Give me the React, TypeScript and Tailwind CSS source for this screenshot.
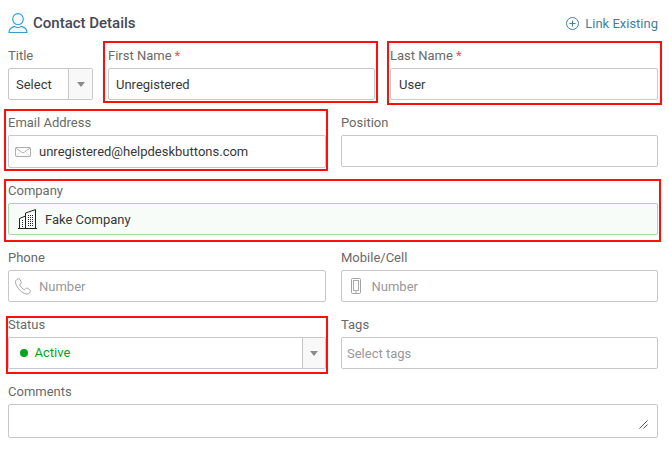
import React from 'react';

type FieldProps = {
  label: string;
  required?: boolean;
  className?: string;
  box?: string;
  mark?: string;
  children?: React.ReactNode;
};

function Field({ label, required, className = '', box = 'h-8 border-[#c8c8c8] bg-white', mark, children }: FieldProps) {
  return (
    <div className={`relative ${className}`}>
      <div className="h-6 pt-[2px] leading-5 whitespace-nowrap text-[#6a6a6a]">
        {label}
        {required && <span className="ml-[3px] text-[#f0505a]">*</span>}
      </div>
      <div className={`flex items-center rounded-[2px] border text-[#383838] ${box}`}>{children}</div>
      {mark && <div className={`pointer-events-none absolute border-2 border-[#ff0f0a] ${mark}`} />}
    </div>
  );
}

function Arrow({ width = 'w-6' }: { width?: string }) {
  return (
    <div className={`ml-auto flex h-full items-center justify-center border-l border-[#c8c8c8] bg-[#f8f8f8] ${width}`}>
      <svg width="8" height="5" viewBox="0 0 8 5" fill="#8c8c8c"><path d="M0 0h8L4 5z" /></svg>
    </div>
  );
}

function PersonIcon() {
  return (
    <svg width="20" height="21" viewBox="0 0 20 21" fill="#f3f9fd" stroke="#3a9bcb" strokeWidth="1.1">
      <ellipse cx="10" cy="6.2" rx="5.3" ry="5.6" />
      <path d="M1 19.500c0-3.600 2-5.100 5.600-6.100 2 1.300 4.800 1.300 6.800 0 3.600 1 5.600 2.500 5.600 6.100z" />
    </svg>
  );
}

function MailIcon() {
  return (
    <svg width="16" height="10" viewBox="0 0 16 10" fill="none" stroke="#a3a3a3" strokeWidth="0.9">
      <rect x="0.5" y="0.5" width="15" height="9" rx="0.7" />
      <path d="M1 1l5.800 4.300q1.200 0.900 2.400 0L15 1" strokeWidth="0.8" />
      <path d="M1 9l4.500-4.300M15 9l-4.500-4.300" strokeWidth="0.35" />
    </svg>
  );
}

function BuildingIcon() {
  return (
    <svg width="19" height="20" viewBox="0 0 19 20" fill="none" stroke="#222">
      <path d="M0 19.500h19M1.500 19V9.500L7.500 7M7.500 19V4L17.500 0.600V19" />
      <path d="M4.500 11v7M10.500 6v12M12.500 6v12M14.500 6v12" strokeDasharray="1 1" />
    </svg>
  );
}

function PhoneIcon() {
  return (
    <svg width="16" height="17" viewBox="0 0 16 17" fill="none" stroke="#999" strokeWidth="0.9">
      <path d="M3.600 0.700C1.200 1.300 0 3.200 0.700 5.500 2 10 6.700 15 11 16c2.100 0.400 3.800-0.500 4.400-2.500 0.200-0.700 0-1.200-0.500-1.600l-2.300-1.600c-0.600-0.400-1.300-0.300-1.800 0.200l-0.800 0.900c-0.400 0.400-0.900 0.400-1.300 0.100C7.200 10.400 5.900 9 4.900 7.500c-0.300-0.500-0.200-0.900 0.200-1.300l0.900-0.700c0.500-0.500 0.600-1.100 0.200-1.700L4.900 1.300C4.500 0.800 4.100 0.600 3.600 0.700z" />
    </svg>
  );
}

function MobileIcon() {
  return (
    <svg width="10" height="16" viewBox="0 0 10 16" fill="none" stroke="#a3a3a3">
      <rect x="0.500" y="0.500" width="9" height="15" rx="1" />
      <rect x="2.500" y="2.500" width="5" height="10" strokeWidth="0.900" />
      <path d="M4 14h2" strokeWidth="0.900" />
    </svg>
  );
}

export default function App() {
  return (
    <div className="h-[452px] w-[669px] overflow-hidden bg-white pr-[11px] pl-2 font-['Roboto',sans-serif] text-[13px]">
      <header className="flex h-11 items-start">
        <div className="pt-[13px]"><PersonIcon /></div>
        <h1 className="ml-[5px] pt-[12px] text-[15px] leading-[22px] font-medium text-[#454856]">Contact Details</h1>
        <div className="ml-auto flex items-start pt-[13px] text-[#417f9f]">
          <svg className="mt-1" width="13" height="13" viewBox="0 0 13 13" fill="none" stroke="currentColor">
            <circle cx="6.500" cy="6.500" r="6" /><path d="M3.500 6.500h6M6.500 3.500v6" />
          </svg>
          <span className="ml-[6px] leading-[22px]">Link Existing</span>
        </div>
      </header>

      <div className="flex h-[67px]">
        <Field label="Title" className="w-[85px]">
          <span className="ml-[7px] pt-[2px]">Select</span><Arrow />
        </Field>
        <Field label="First Name" required className="ml-[15px] w-[267px]" mark="-top-[3px] -left-[5px] h-[62px] w-[275px]">
          <span className="ml-[7px] pt-[2px]">Unregistered</span>
        </Field>
        <Field label="Last Name" required className="ml-[15px] w-[268px]" mark="-top-[3px] -left-[3px] h-[64px] w-[275px]">
          <span className="ml-2 pt-[2px]">User</span>
        </Field>
      </div>

      <div className="flex h-[68px] gap-[15px]">
        <Field label="Email Address" className="w-[318px]" box="h-[33px] border-[#c8c8c8] bg-white" mark="-top-[2px] -left-1 h-[62px] w-[324px]">
          <span className="ml-[6px]"><MailIcon /></span><span className="ml-2">unregistered@helpdeskbuttons.com</span>
        </Field>
        <Field label="Position" className="w-[317px]" />
      </div>

      <div className="h-[67px]">
        <Field label="Company" box="h-8 border-[#a8d6a8] bg-[#f7fcf9]" mark="top-0 -left-1 h-[63px] w-[657px]">
          <span className="ml-[9px]"><BuildingIcon /></span><span className="ml-2 pt-[2px]">Fake Company</span>
        </Field>
      </div>

      <div className="flex h-[67px] gap-[15px]">
        <Field label="Phone" className="w-[318px]">
          <span className="ml-[6px]"><PhoneIcon /></span><span className="ml-2 pt-[2px] text-[#999]">Number</span>
        </Field>
        <Field label="Mobile/Cell" className="w-[317px]">
          <span className="ml-[9px]"><MobileIcon /></span><span className="ml-[10.5px] pt-[2px] text-[#999]">Number</span>
        </Field>
      </div>

      <div className="flex h-[67px] gap-[15px]">
        <Field label="Status" className="w-[318px]" mark="top-[3px] -left-[2px] h-[58px] w-[322px]">
          <span className="ml-[11px] size-2 rounded-full bg-[#00a61d]" />
          <span className="ml-[6.5px] text-[#00a61d]">Active</span><Arrow width="w-[23px]" />
        </Field>
        <Field label="Tags" className="w-[317px]"><span className="ml-[5px] pt-[2px] text-[#999]">Select tags</span></Field>
      </div>

      <Field label="Comments" box="h-[34px] border-[#c8c8c8] bg-white">
        <svg className="mt-[7px] mr-[9px] ml-auto" width="9" height="9" viewBox="0 0 9 9" fill="none" stroke="#444" strokeWidth="0.900">
          <path d="M0.500 8.500l8-8M4.500 8.500l4-4" />
        </svg>
      </Field>
    </div>
  );
}
